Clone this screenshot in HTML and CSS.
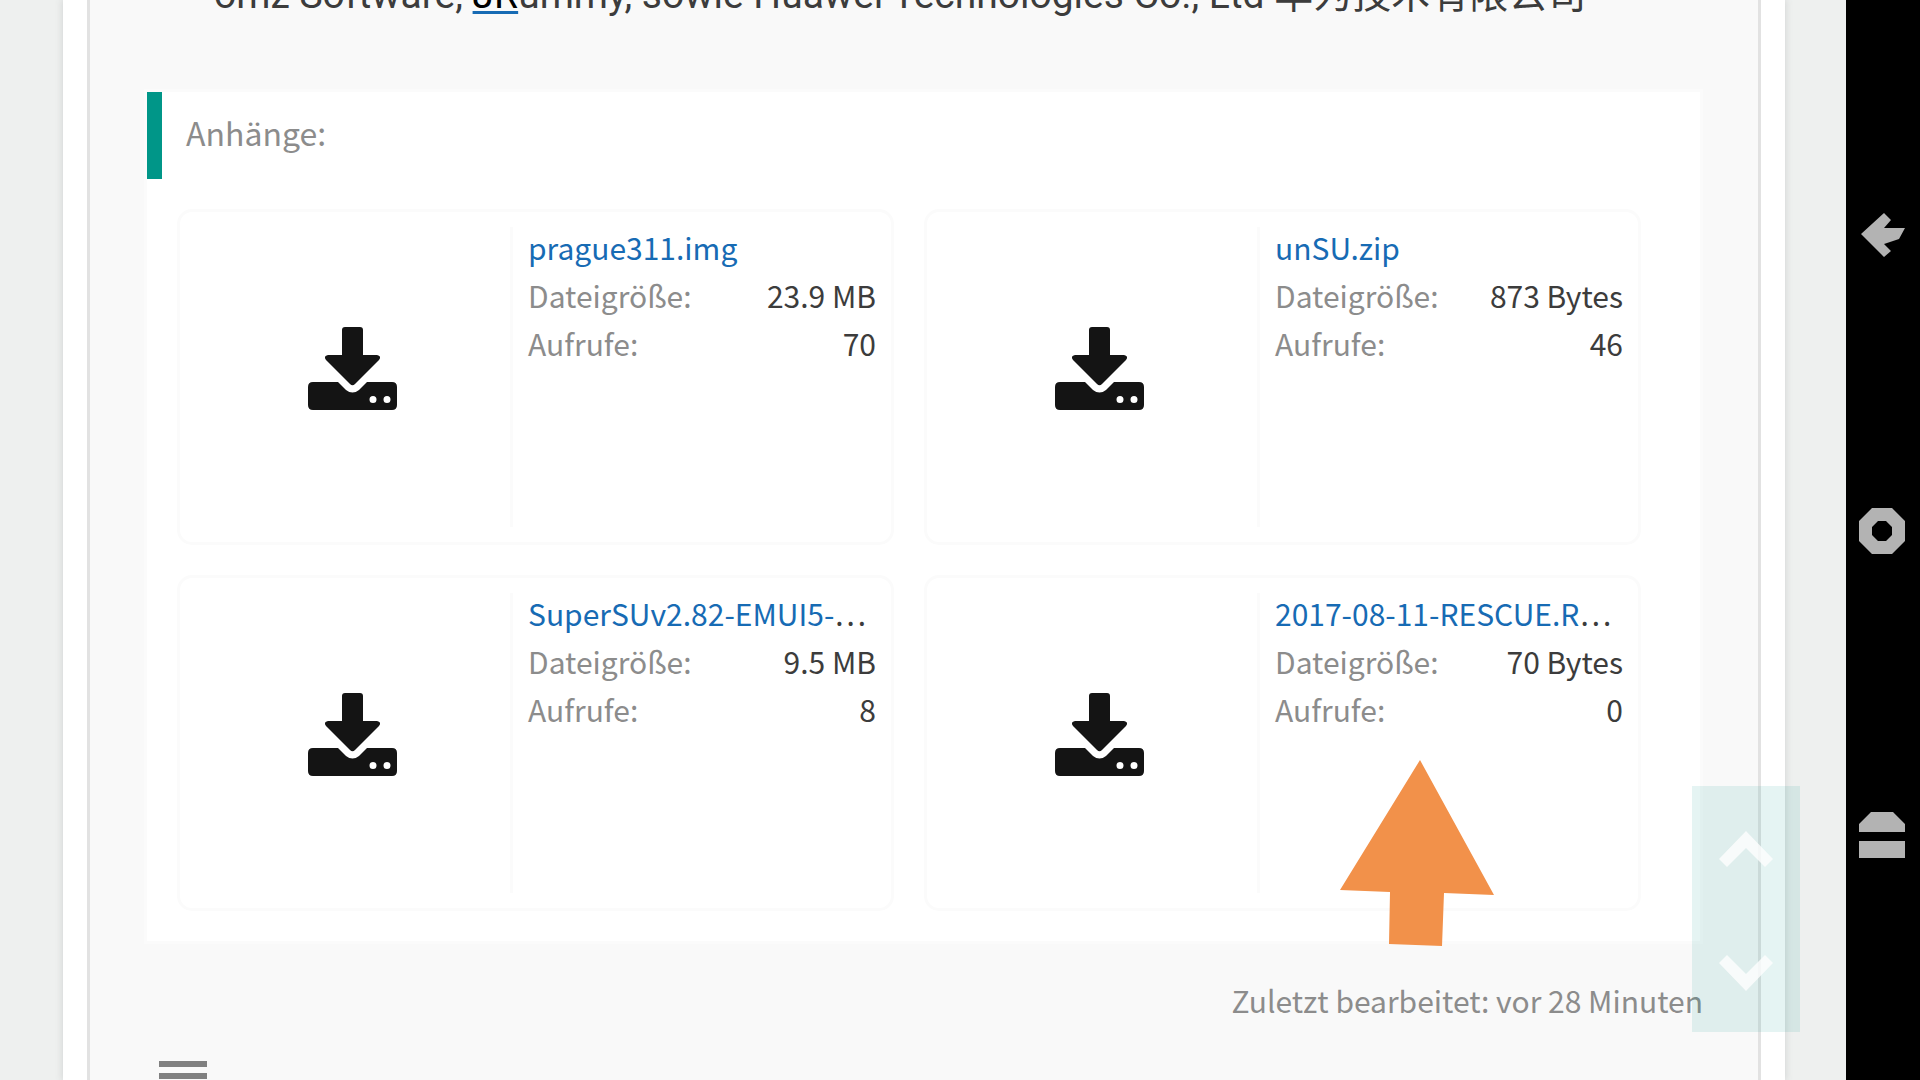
FILE: index.html
```html
<!DOCTYPE html>
<html lang="de">
<head>
    <meta charset="UTF-8">
    <meta name="viewport" content="width=device-width, initial-scale=1.0">
    <title>Anhänge</title>
    <link rel="stylesheet" href="styles.css">
</head>
<body>
    <!-- shared icon -->
    <svg class="icon-defs" viewBox="0 0 89 83">
        <symbol id="icon-download" viewBox="0 0 89 83">
            <path d="M37 0h15q3 0 3 3v25h14q5 1 2 5L47 57q-2.500 2.500-5 0L18 33q-3-4 2-5h14V3q0-3 3-3z"/>
            <path fill-rule="evenodd" d="M5 55h25l8 8q6.500 5 13 0l8-8h25q5 0 5 5v18q0 5-5 5H5q-5 0-5-5V60q0-5 5-5zM65 69a3.500 3.500 0 1 0 0 7a3.500 3.500 0 1 0 0-7zM79 69a3.500 3.500 0 1 0 0 7a3.500 3.500 0 1 0 0-7z"/>
        </symbol>
    </svg>

    <div class="screen">
        <div class="page">
            <main class="wrapper">
                <article class="post">
                    <p class="post-text">omz Software, <a href="#">JR</a>ummy, sowie Huawei Technologies Co., Ltd 华为技术有限公司</p>

                    <section class="attachments">
                        <h4 class="attachments-title">Anhänge:</h4>
                        <ul class="files">
                            <li class="file">
                                <div class="thumb"><svg class="icon-download"><use href="#icon-download"/></svg></div>
                                <div class="info">
                                    <div class="filename"><a href="#">prague311.img</a></div>
                                    <dl><dt>Dateigröße:</dt><dd>23.9 MB</dd></dl>
                                    <dl><dt>Aufrufe:</dt><dd>70</dd></dl>
                                </div>
                            </li>
                            <li class="file">
                                <div class="thumb"><svg class="icon-download"><use href="#icon-download"/></svg></div>
                                <div class="info">
                                    <div class="filename"><a href="#">unSU.zip</a></div>
                                    <dl><dt>Dateigröße:</dt><dd>873 Bytes</dd></dl>
                                    <dl><dt>Aufrufe:</dt><dd>46</dd></dl>
                                </div>
                            </li>
                            <li class="file">
                                <div class="thumb"><svg class="icon-download"><use href="#icon-download"/></svg></div>
                                <div class="info">
                                    <div class="filename"><a href="#">SuperSUv2.82-EMUI5-</a>…</div>
                                    <dl><dt>Dateigröße:</dt><dd>9.5 MB</dd></dl>
                                    <dl><dt>Aufrufe:</dt><dd>8</dd></dl>
                                </div>
                            </li>
                            <li class="file">
                                <div class="thumb"><svg class="icon-download"><use href="#icon-download"/></svg></div>
                                <div class="info">
                                    <div class="filename"><a href="#">2017-08-11-RESCUE.R</a>…</div>
                                    <dl><dt>Dateigröße:</dt><dd>70 Bytes</dd></dl>
                                    <dl><dt>Aufrufe:</dt><dd>0</dd></dl>
                                </div>
                                <svg class="pointer" viewBox="0 0 154 186"><path d="M80 0L154 135L104 133L102 186L49 184L50 132L0 130z"/></svg>
                            </li>
                        </ul>
                    </section>

                    <p class="edited">Zuletzt bearbeitet: vor 28 Minuten</p>
                    <button class="menu-button" type="button" aria-label="Menü"><span></span><span></span><span></span></button>
                </article>
            </main>

            <div class="scroll-buttons">
                <button type="button" aria-label="Nach oben"><svg viewBox="0 0 54 36"><path d="M27 0L54 28L46 36L27 17L8 36L0 28z"/></svg></button>
                <button type="button" aria-label="Nach unten"><svg viewBox="0 0 54 36"><path d="M27 36L54 8L46 0L27 19L8 0L0 8z"/></svg></button>
            </div>
        </div>

        <nav class="navbar">
            <button type="button" aria-label="Zurück"><svg viewBox="0 0 46 46"><path d="M2 22L25 1L32 8L25 16H46L40 27L25 32L32 39L25 45z"/></svg></button>
            <button class="home" type="button" aria-label="Startseite"><svg viewBox="0 0 46 46"><path fill-rule="evenodd" d="M13 0H33L46 13V33L33 46H13L0 33V13zM19 13L13 19V27L19 33H27L33 27V19L27 13z"/></svg></button>
            <button type="button" aria-label="Übersicht"><svg viewBox="0 0 46 46"><path d="M12 0H34L46 12V20H0V12zM0 29H46V46H0z"/></svg></button>
        </nav>
    </div>
</body>
</html>
```
FILE: styles.css
```css
* {
    box-sizing: border-box;
}
body {
    margin: 0;
    height: 100vh;
    overflow: hidden;
    background-color: #eef0ef;
    color: #3c3c3c;
    font-family: "Noto Sans CJK SC", "Open Sans", sans-serif;
    font-size: 30px;
    line-height: 48px;
}
a {
    color: #176bb4;
    text-decoration: none;
}
button {
    display: flex;
    align-items: center;
    justify-content: center;
    padding: 0;
    border: none;
    background: none;
    cursor: pointer;
}
p, h4, ul, dl, dd {
    margin: 0;
    padding: 0;
}
.icon-defs {
    display: none;
}
.screen {
    display: flex;
    height: 100%;
}
.page {
    position: relative;
    flex: 1;
    min-width: 0;
    padding: 0 61px 0 63px;
    overflow: hidden;
}
.wrapper {
    height: 100%;
    padding: 0 24px;
    background-color: #fff;
    box-shadow: 0 0 7px 1px #d4d6d6;
}
.post {
    display: flow-root;
    height: 100%;
    padding: 0 55px 0 54px;
    border: solid #e2e2e2;
    border-width: 0 3px;
    background-color: #f9f9f9;
}

/* last line of the post, the top is scrolled away */
.post-text {
    margin-top: -29px;
    padding-left: 70px;
    font-family: Roboto, "Noto Sans CJK SC", sans-serif;
    font-size: 39px;
    white-space: nowrap;
}
.post-text a {
    color: #000;
    text-decoration: underline 3px #176bb4;
    text-decoration-skip-ink: none;
    text-underline-offset: 3px;
}

/* attachments */
.attachments {
    margin-top: 70px;
    border: 3px solid #fbfbfb;
    background-color: #fff;
}
.attachments-title {
    padding: 16px 24px 23px;
    border-left: 15px solid #009688;
    color: #8c8c8c;
    font-size: 32px;
    font-weight: normal;
}
.files {
    display: grid;
    grid-template-columns: 1fr 1fr;
    gap: 30px;
    padding: 30px 59px 30px 30px;
    list-style: none;
}
.file {
    position: relative;
    display: flex;
    min-width: 0;
    padding: 15px;
    border: 3px solid #fbfbfb;
    border-radius: 15px;
}
.thumb {
    display: flex;
    justify-content: center;
    width: 318px;
    height: 300px;
    padding-top: 100px;
    border-right: 3px solid #fbfbfb;
}
.icon-download {
    width: 89px;
    height: 83px;
    fill: #141414;
}
.info {
    flex: 1;
    min-width: 0;
    margin-top: -4px;
    padding-left: 15px;
}
.filename {
    overflow: hidden;
    white-space: nowrap;
}
.info dl {
    display: flex;
    justify-content: space-between;
}
.info dt {
    color: #8c8c8c;
}

/* drawn over the last file */
.pointer {
    position: absolute;
    top: 182px;
    right: 144px;
    width: 154px;
    height: 186px;
    fill: #f2914a;
}
.edited {
    margin-top: 32px;
    color: #8c8c8c;
    text-align: right;
}
.menu-button {
    flex-direction: column;
    gap: 6px;
    margin: 37px 0 0 15px;
}
.menu-button span {
    width: 48px;
    height: 6px;
    background-color: #808080;
}

/* scroll up / down */
.scroll-buttons {
    position: absolute;
    right: 46px;
    bottom: 48px;
    display: flex;
    flex-direction: column;
    gap: 88px;
    width: 108px;
    padding: 45px 0 41px;
    background-color: rgba(0, 150, 136, 0.1);
}
.scroll-buttons svg {
    width: 54px;
    height: 36px;
    fill: #fff;
    opacity: 0.8;
}

/* android navigation bar */
.navbar {
    display: flex;
    flex-direction: column;
    width: 74px;
    padding: 212px 2px 0 0;
    background-color: #000;
}
.navbar .home {
    margin: 250px 0 258px;
}
.navbar svg {
    width: 46px;
    height: 46px;
    fill: #b3b3b3;
}
```
